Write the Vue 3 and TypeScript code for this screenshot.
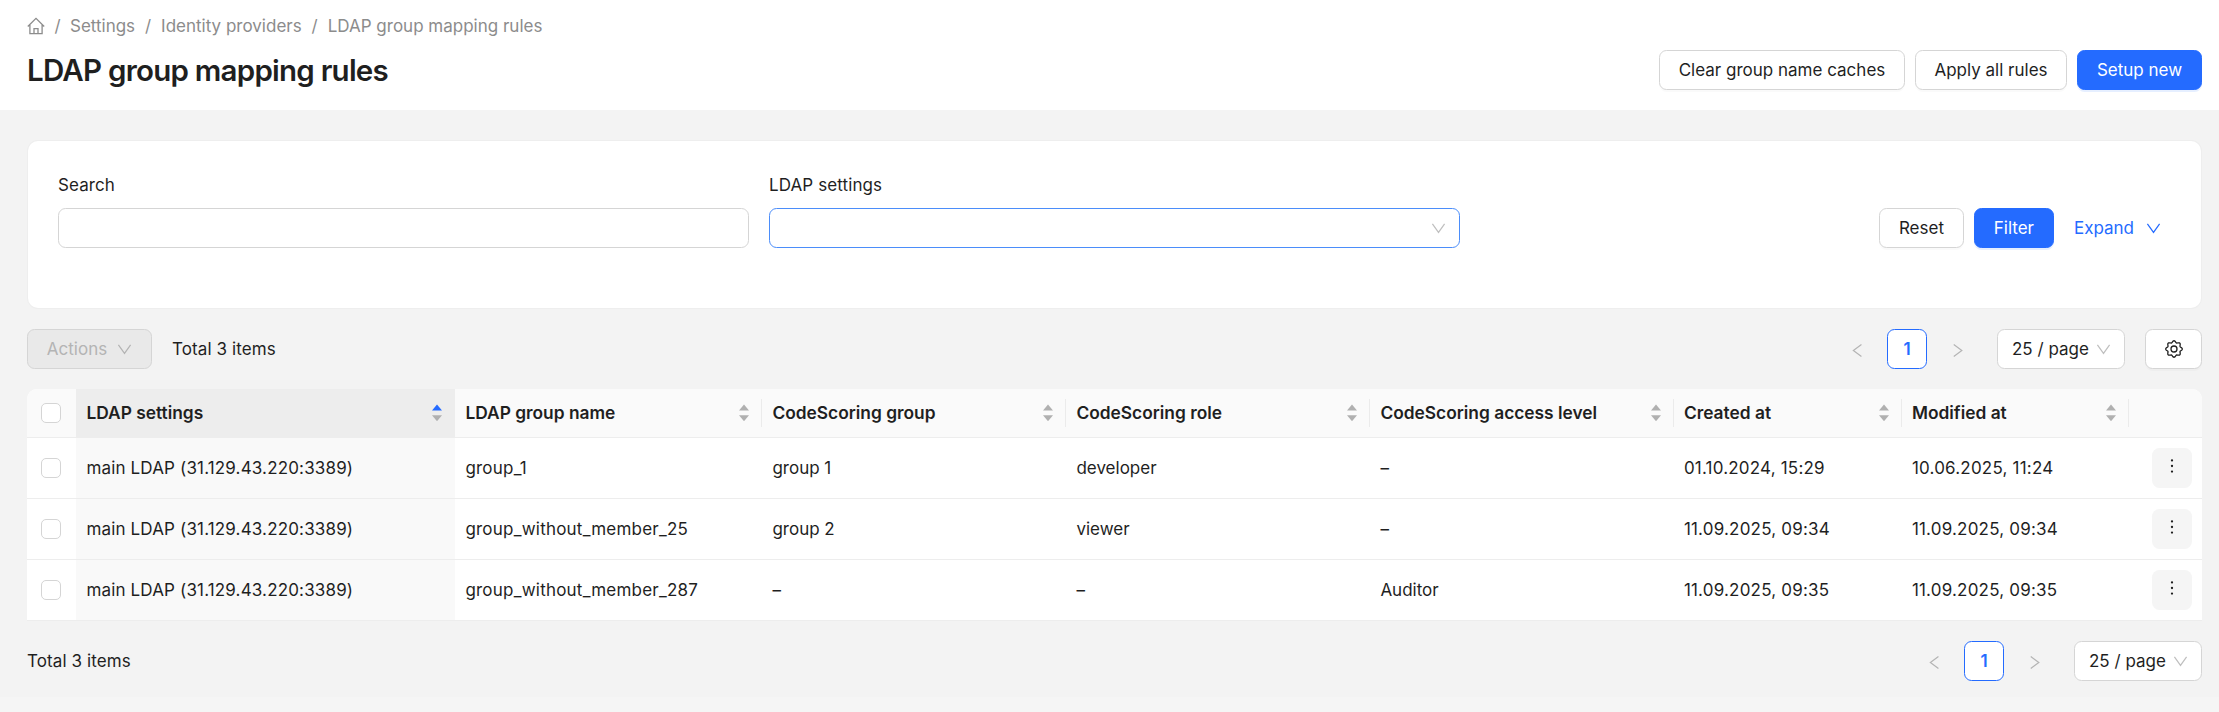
<script setup lang="ts">
interface Column {
  title: string
  key: keyof Rule
  sorted?: boolean
}
interface Rule {
  settings: string
  groupName: string
  group: string
  role: string
  access: string
  created: string
  modified: string
}

const crumbs: string[] = ['Settings', 'Identity providers', 'LDAP group mapping rules']

const columns: Column[] = [
  { title: 'LDAP settings', key: 'settings', sorted: true },
  { title: 'LDAP group name', key: 'groupName' },
  { title: 'CodeScoring group', key: 'group' },
  { title: 'CodeScoring role', key: 'role' },
  { title: 'CodeScoring access level', key: 'access' },
  { title: 'Created at', key: 'created' },
  { title: 'Modified at', key: 'modified' },
]

const rules: Rule[] = [
  { settings: 'main LDAP (31.129.43.220:3389)', groupName: 'group_1', group: 'group 1', role: 'developer', access: '–', created: '01.10.2024, 15:29', modified: '10.06.2025, 11:24' },
  { settings: 'main LDAP (31.129.43.220:3389)', groupName: 'group_without_member_25', group: 'group 2', role: 'viewer', access: '–', created: '11.09.2025, 09:34', modified: '11.09.2025, 09:34' },
  { settings: 'main LDAP (31.129.43.220:3389)', groupName: 'group_without_member_287', group: '–', role: '–', access: 'Auditor', created: '11.09.2025, 09:35', modified: '11.09.2025, 09:35' },
]

const chevron = 'M1.5 3 L8 12.2 L14.5 3'
const gear = (() => {
  const pts: string[] = []
  for (let i = 0; i <= 120; i++) {
    const a = (i / 120) * Math.PI * 2
    const r = 7.4 + 0.85 * Math.cos(8 * a)
    pts.push(`${(9 + r * Math.sin(a)).toFixed(2)} ${(9 - r * Math.cos(a)).toFixed(2)}`)
  }
  return 'M' + pts.join('L') + 'Z'
})()
</script>

<template>
  <div class="page">
    <header class="header">
      <nav class="crumbs">
        <svg class="home" viewBox="0 0 18 18"><path d="M0.8 9.5 L9 1.4 L17.2 9.5 M2.9 8 V16.6 H15.1 V8 M7 16.6 V11.6 H11 V16.6" /></svg>
        <template v-for="c in crumbs" :key="c"><i>/</i><span>{{ c }}</span></template>
      </nav>
      <div class="title-row">
        <h1>LDAP group mapping rules</h1>
        <div class="buttons">
          <button class="btn clear"><span>Clear group name caches</span></button>
          <button class="btn apply"><span>Apply all rules</span></button>
          <button class="btn primary setup"><span>Setup new</span></button>
        </div>
      </div>
    </header>

    <main>
      <section class="filters">
        <label class="field"><span class="lbl">Search</span><span class="input"></span></label>
        <label class="field"><span class="lbl">LDAP settings</span>
          <span class="input focused"><svg class="chev pale" viewBox="0 0 16 16"><path :d="chevron" /></svg></span>
        </label>
        <div class="filter-actions">
          <button class="btn reset"><span>Reset</span></button>
          <button class="btn primary filter"><span>Filter</span></button>
          <a class="expand"><span>Expand</span><svg class="chev" viewBox="0 0 16 16"><path :d="chevron" /></svg></a>
        </div>
      </section>

      <div class="toolbar">
        <button class="btn actions"><span>Actions</span><svg class="chev" viewBox="0 0 16 16"><path :d="chevron" /></svg></button>
        <span class="total">Total 3 items</span>
        <div class="pager">
          <span class="arrow"><svg viewBox="0 0 16 16"><path d="M12.2 1.7 L3.6 8 L12.2 14.3" /></svg></span>
          <span class="current">1</span>
          <span class="arrow"><svg viewBox="0 0 16 16"><path d="M4 1.7 L12.6 8 L4 14.3" /></svg></span>
          <span class="size"><span>25 / page</span><svg class="chev pale" viewBox="0 0 16 16"><path :d="chevron" /></svg></span>
        </div>
        <button class="btn cog"><svg viewBox="0 0 18 18"><path :d="gear" /><circle cx="9" cy="9" r="3" /></svg></button>
      </div>

      <div class="table">
        <div class="row head">
          <div class="cell pick"><span class="box"></span></div>
          <div v-for="c in columns" :key="c.key" class="cell" :class="{ sorted: c.sorted }">
            <span>{{ c.title }}</span>
            <svg class="sorter" viewBox="0 0 12 18"><path class="up" d="M6 0.6 L11 6.6 H1 Z" /><path d="M6 17.2 L11 11.2 H1 Z" /></svg>
          </div>
          <div class="cell menu"></div>
        </div>
        <div v-for="(r, i) in rules" :key="i" class="row">
          <div class="cell pick"><span class="box"></span></div>
          <div v-for="c in columns" :key="c.key" class="cell" :class="[c.key, { sorted: c.sorted }]"><span>{{ r[c.key] }}</span></div>
          <div class="cell menu">
            <span class="more"><svg viewBox="0 0 4 16"><circle cx="2" cy="2.4" r="1.15" /><circle cx="2" cy="8" r="1.15" /><circle cx="2" cy="13.6" r="1.15" /></svg></span>
          </div>
        </div>
      </div>

      <footer class="toolbar bottom">
        <span class="total">Total 3 items</span>
        <div class="pager">
          <span class="arrow"><svg viewBox="0 0 16 16"><path d="M12.2 1.7 L3.6 8 L12.2 14.3" /></svg></span>
          <span class="current">1</span>
          <span class="arrow"><svg viewBox="0 0 16 16"><path d="M4 1.7 L12.6 8 L4 14.3" /></svg></span>
          <span class="size"><span>25 / page</span><svg class="chev pale" viewBox="0 0 16 16"><path :d="chevron" /></svg></span>
        </div>
      </footer>
    </main>
  </div>
</template>

<style>
body { margin: 0; background: #f3f3f3; }
</style>

<style scoped>
* { box-sizing: border-box; }
.page { height: 712px; overflow: hidden; background: linear-gradient(#f3f3f3 697px, #f5f5f5 697px); color: #1f1f1f; font-family: Inter, "Liberation Sans", sans-serif; font-size: 17px; line-height: 28px; white-space: nowrap; }
svg { fill: none; stroke: currentColor; stroke-width: 1.3; display: block; flex: none; }
.header { height: 110px; background: #fff; padding: 12px 17px 0 27px; }
.crumbs { display: flex; align-items: center; height: 28px; color: #8c8c8c; }
.home { width: 18px; height: 18px; }
.crumbs i { font-style: normal; width: 26px; text-align: center; }
.crumbs i:first-of-type { width: 25px; }
.title-row { display: flex; justify-content: space-between; align-items: flex-start; padding-top: 10px; }
h1 { margin: 1px 0 0; font-size: 29.5px; line-height: 38px; font-weight: 600; letter-spacing: -0.76px; }
.buttons { display: flex; gap: 10px; }
.btn { height: 40px; padding: 0; border: 1px solid #d5d5d5; border-radius: 7.5px; background: #fff; color: #1f1f1f; font: inherit; display: flex; align-items: center; justify-content: center; box-shadow: 0 2px 0 rgba(0, 0, 0, 0.02); }
.primary { background: #246bff; border-color: #246bff; color: #fff; box-shadow: 0 2px 0 rgba(5, 100, 255, 0.1); }
.clear { width: 246px; }
.apply { width: 152px; }
.setup { width: 125px; }
.reset { width: 85px; }
.filter { width: 80px; }
main { padding: 31px 17px 0 27px; }
.filters { height: 167px; margin: 0 1px; background: #fff; border-radius: 10px; box-shadow: 0 0 0 1px #eee; padding: 30px 40px 0 30px; display: flex; align-items: flex-start; gap: 20px; }
.field { width: 691px; display: flex; flex-direction: column; gap: 9px; }
.lbl, .total { letter-spacing: 0.1px; }
.input { height: 40px; border: 1px solid #d5d5d5; border-radius: 7.5px; display: flex; align-items: center; justify-content: flex-end; padding-right: 13px; }
.focused { border-color: #4b8dfa; }
.chev { width: 15px; height: 15px; }
.pale { color: #bfbfbf; }
.filter-actions { margin-left: auto; padding-top: 37px; display: flex; gap: 10px; }
.expand { display: flex; align-items: center; gap: 12px; color: #246bff; padding-left: 10px; }
.toolbar { display: flex; align-items: center; height: 40px; margin-top: 21px; }
.actions { width: 125px; background: #e9e9e9; color: #b4b4b4; gap: 10px; box-shadow: none; margin-right: 20px; }
.pager { margin-left: auto; display: flex; align-items: center; }
.arrow { width: 40px; height: 40px; display: flex; align-items: center; justify-content: center; color: #b4b4b4; padding-top: 3px; }
.arrow svg { width: 15px; height: 15px; }
.current { width: 40px; height: 40px; margin: 0 10px; border: 1px solid #246bff; border-radius: 7.5px; background: #fff; color: #246bff; font-weight: 600; display: flex; align-items: center; justify-content: center; }
.size { width: 128px; height: 40px; margin-left: 20px; border: 1px solid #d5d5d5; border-radius: 7.5px; background: #fff; display: flex; align-items: center; justify-content: space-between; padding: 0 13px 0 14px; }
.cog { width: 57px; margin-left: 20px; }
.cog svg { width: 18px; height: 18px; }
.table { margin-top: 20px; border-radius: 10px 10px 0 0; overflow: hidden; background: #fff; }
.row { display: grid; grid-template-columns: 49px 379px 307px 304px 304px 303.5px 228px 227.5px 73px; height: 61px; border-bottom: 1px solid #ededed; }
.head { height: 49px; background: #fafafa; font-weight: 600; font-size: 17.35px; }
.cell { display: flex; align-items: center; padding: 0 10px 0 10.4px; position: relative; }
.cell.settings { letter-spacing: 0.16px; }
.cell.groupName { letter-spacing: 0.22px; }
.cell.created, .cell.modified { letter-spacing: 0.2px; }
.sorted { background: #f9f9f9; }
.head .sorted { background: #ededed; }
.head .cell { justify-content: space-between; padding-right: 12px; }
.head .cell:not(.pick):not(.sorted):not(.menu)::after { content: ""; position: absolute; right: 0; top: 10px; width: 1px; height: 28px; background: #ebebeb; }
.cell.pick, .head .cell.pick { justify-content: flex-start; padding: 0 0 0 14px; }
.box { width: 20px; height: 20px; border: 1px solid #d5d5d5; border-radius: 5px; background: #fff; }
.sorter { width: 12px; height: 18px; fill: #b0b0b0; stroke: none; }
.sorted .up { fill: #246bff; }
.menu { justify-content: flex-end; }
.more { width: 40px; height: 40px; border-radius: 7.5px; background: #f5f5f5; display: flex; justify-content: center; padding-top: 10px; }
.more svg { width: 4px; height: 16px; fill: #1f1f1f; stroke: none; }
.bottom { margin-top: 20px; }
</style>
